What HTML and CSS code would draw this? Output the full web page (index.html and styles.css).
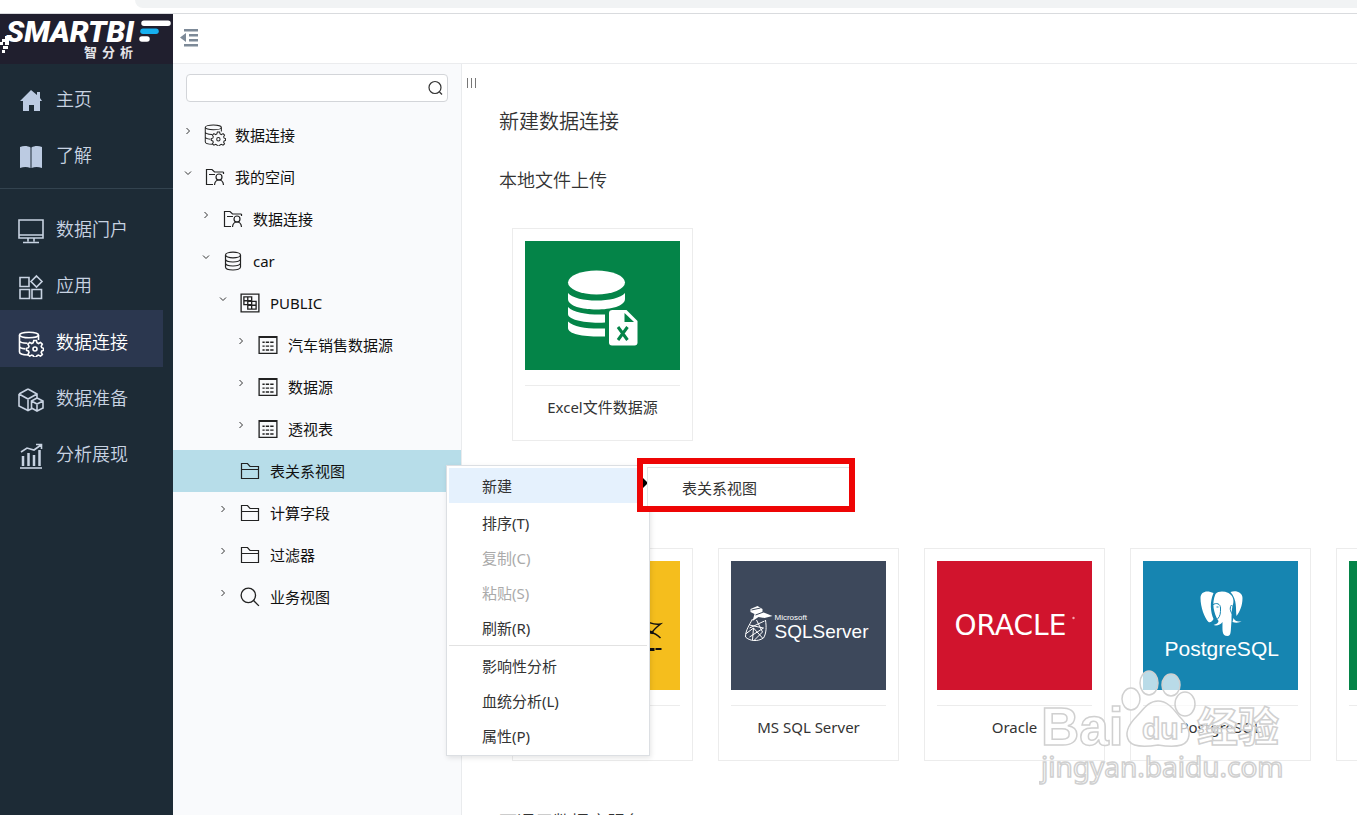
FILE: index.html
```html
<!DOCTYPE html>
<html lang="zh-CN">
<head>
<meta charset="utf-8">
<title>Smartbi 数据连接</title>
<link rel="stylesheet" href="styles.css">
</head>
<body>
<svg class="defs" aria-hidden="true">
  <symbol id="i-dbgear" viewBox="0 0 26 26">
    <ellipse cx="11" cy="4" rx="9.5" ry="2.8"/>
    <path d="M1.500 4v17c0 1.800 4 3 8.500 3M20.500 4v5M1.500 9.500c0 1.600 3.500 2.700 8 2.800M1.500 15.300c0 1.400 2.500 2.300 6 2.600"/>
    <path d="M15.800 10.500h2.600l.6 2.300 1.500.7 2-1.100 1.800 1.800-1.100 2 .6 1.500 1.700.6v2.100l-1.700.6-.6 1.500 1.100 2-1.800 1.600-2-1-1.500.6-.6 1.300h-2.600l-.6-1.300-1.500-.6-2 1-1.800-1.600 1.100-2-.6-1.500-1.800-.6v-2.100l1.800-.6.6-1.500-1.100-2 1.800-1.800 2 1.100 1.500-.7z" transform="translate(0 -1)"/>
    <circle cx="17" cy="18" r="2"/>
  </symbol>
  <symbol id="i-folder" viewBox="0 0 20 18"><path d="M1.500 16.500v-15h6l2.500 3h8.500v12zM1.500 7.500h17"/></symbol>
  <symbol id="i-userfolder" viewBox="0 0 20 18"><path d="M8 16.500H1.500v-15h5.500l2.500 2.500h9M4 6.500h6M18.500 4v2"/><circle cx="14" cy="9" r="3"/><path d="M9.500 17c.3-3.300 2-5 4.500-5s4.200 1.700 4.500 5"/></symbol>
  <symbol id="i-db" viewBox="0 0 18 20"><ellipse cx="9" cy="4" rx="7.500" ry="2.800"/><path d="M1.500 4v12c0 4 15 4 15 0V4M1.500 8c0 4 15 4 15 0M1.500 12c0 4 15 4 15 0"/></symbol>
  <symbol id="i-schema" viewBox="0 0 18 18"><path d="M1 1h16v16H1zM3.500 3.500h7v7h-7zM7 3.500v7M3.500 7h7M7 7.500h7.500v7H7zM10.500 7.500v7M7 11h7.500"/></symbol>
  <symbol id="i-table" viewBox="0 0 18 18"><path d="M1 1.500h16v15H1zM1 2h16"/><path d="M4 6.500h2M7 6.500h3M11 6.500h3M4 10h2M7 10h3M11 10h3M4 13.500h2M7 13.500h3M11 13.500h3"/></symbol>
  <symbol id="i-search" viewBox="0 0 18 18"><circle cx="7.500" cy="7.500" r="6.500"/><path d="m12 12 5 5"/></symbol>
  <symbol id="i-lens" viewBox="0 0 18 18"><circle cx="9" cy="8.500" r="6"/><path d="m13.500 13 2.500 2.500"/></symbol>
  <symbol id="i-right" viewBox="0 0 8 8"><path d="m2.500 1 3 3-3 3"/></symbol>
  <symbol id="i-down" viewBox="0 0 8 8"><path d="m1 2.500 3 3 3-3"/></symbol>
</svg>

<div class="strip"><div class="strip-bar"></div></div>
<div class="app">
  <aside class="side">
    <a class="logo" href="#" aria-label="Smartbi">
      <svg width="173" height="50" viewBox="0 0 173 50">
        <path fill="#fff" d="M5 22h6v3H5zM2 25h7v3H2zM0 28h3v3H0zM5 28h4v3H5zM3 32h5v3H3zM2 36h3v3H2z"/>
        <text x="6" y="28" class="logo-name">SMARTBI</text>
        <text y="43" class="logo-sub"><tspan x="84">智</tspan><tspan x="102">分</tspan><tspan x="120">析</tspan></text>
        <g stroke-width="5.500" stroke-linecap="round"><path stroke="#fff" d="M144 9.200h24M142 25h5"/><path stroke="#16b0ef" d="M143 17.200h13"/></g>
      </svg>
    </a>
    <nav class="nav">
      <div class="nav-group top">
        <a class="nav-item" href="#"><svg class="ni" viewBox="0 0 26 26"><path class="fill" d="M13 2 2 13h3v10h6v-6h5v6h6V13h2L22 10V4h-3v3z"/></svg>主页</a>
        <a class="nav-item" href="#"><svg class="ni" viewBox="0 0 26 26"><path class="fill" d="M2 3c4-1.500 8-1 10.500.5V24C9 22.500 6 22.500 2 24zM13.500 3.500C16 2 20 1.500 24 3v21c-4-1.500-7-1.500-10.500 0z"/></svg>了解</a>
      </div>
      <div class="nav-group">
        <a class="nav-item" href="#"><svg class="ni" viewBox="0 0 26 26"><path d="M1 2h24v18H1zM1 17h24M10 20v3.500M16 20v3.500M5 24.500h16"/></svg>数据门户</a>
        <a class="nav-item" href="#"><svg class="ni" viewBox="0 0 26 26"><path d="M2 3.500h9v9H2zM2 15.500h9.500v9H2zM14 15.500h9.500v9H14zM18.500 2l5.500 5.500-5.500 5.500L13 7.500z"/></svg>应用</a>
        <a class="nav-item on" href="#" aria-current="page"><svg class="ni"><use href="#i-dbgear"/></svg>数据连接</a>
        <a class="nav-item" href="#"><svg class="ni" viewBox="0 0 26 26"><path d="m10 2 9 5v4M1 7l9-5M1 7v12l9 4.500 4-2M1 7l9 5 9-5M10 12v11M19 11l-5.500 3v7l5.500 3 6-3v-7zM13.500 14l5.500 3 6-3M19 17v7"/></svg>数据准备</a>
        <a class="nav-item" href="#"><svg class="ni" viewBox="0 0 26 26"><path d="M2 25h22"/><path stroke-width="2.500" d="M5 13v10M10.500 10v13M16 12v11M21.500 7v16"/><path d="m3 9 6-4 7 2 7-5M18 1.500h5.500V6"/></svg>分析展现</a>
      </div>
    </nav>
  </aside>

  <div class="work">
    <header class="bar">
      <button class="collapse" type="button" aria-label="收起菜单"><svg width="20" height="18" viewBox="0 0 20 18"><path fill="#7d8a98" d="M4 0h14v2.500H4zM9 5h9v2.500H9zM9 10h9v2.500H9zM4 15h14v2.500H4zM0 8.500 6 4v9z"/></svg></button>
    </header>
    <div class="panes">
      <section class="tree" aria-label="资源树">
        <div class="search"><input type="search" aria-label="搜索"><svg width="18" height="18"><use href="#i-lens"/></svg></div>
        <ul class="rows">
          <li><button type="button" class="row l0"><svg class="ar"><use href="#i-right"/></svg><svg class="ic big"><use href="#i-dbgear"/></svg>数据连接</button></li>
          <li><button type="button" class="row l0"><svg class="ar"><use href="#i-down"/></svg><svg class="ic"><use href="#i-userfolder"/></svg>我的空间</button></li>
          <li><button type="button" class="row l1"><svg class="ar"><use href="#i-right"/></svg><svg class="ic"><use href="#i-userfolder"/></svg>数据连接</button></li>
          <li><button type="button" class="row l1"><svg class="ar"><use href="#i-down"/></svg><svg class="ic"><use href="#i-db"/></svg>car</button></li>
          <li><button type="button" class="row l2"><svg class="ar"><use href="#i-down"/></svg><svg class="ic"><use href="#i-schema"/></svg>PUBLIC</button></li>
          <li><button type="button" class="row l3"><svg class="ar"><use href="#i-right"/></svg><svg class="ic"><use href="#i-table"/></svg>汽车销售数据源</button></li>
          <li><button type="button" class="row l3"><svg class="ar"><use href="#i-right"/></svg><svg class="ic"><use href="#i-table"/></svg>数据源</button></li>
          <li><button type="button" class="row l3"><svg class="ar"><use href="#i-right"/></svg><svg class="ic"><use href="#i-table"/></svg>透视表</button></li>
          <li><button type="button" class="row l2 on"><svg class="ar"></svg><svg class="ic"><use href="#i-folder"/></svg>表关系视图</button></li>
          <li><button type="button" class="row l2"><svg class="ar"><use href="#i-right"/></svg><svg class="ic"><use href="#i-folder"/></svg>计算字段</button></li>
          <li><button type="button" class="row l2"><svg class="ar"><use href="#i-right"/></svg><svg class="ic"><use href="#i-folder"/></svg>过滤器</button></li>
          <li><button type="button" class="row l2"><svg class="ar"><use href="#i-right"/></svg><svg class="ic"><use href="#i-search"/></svg>业务视图</button></li>
        </ul>
      </section>

      <main class="main">
        <svg class="grip" width="12" height="12" viewBox="0 0 12 12"><path d="M1.500 1v10M5.500 1v10M9.500 1v10"/></svg>
        <h1>新建数据连接</h1>
        <h2>本地文件上传</h2>
        <div class="cards">
          <a class="card" href="#">
            <svg class="pic green" viewBox="0 0 154 129">
              <g fill="#fff"><ellipse cx="71" cy="41.500" rx="28.500" ry="12"/>
              <path d="M42.500 52c8 10 49 10 57 0v6c0 14-57 14-57 0zM42.500 66c6 6 20 8 37 7.500v8C60 82.500 42.500 79 42.500 73zM42.500 80.500c6 6 20 7.500 37 7v8c-20 .5-37-2-37-8.500z"/>
              <path d="M87 69h14l11 11v21.500q0 3-3 3H86.500q-3 0-3-3V72q0-3 3.500-3z"/></g>
              <path fill="#048448" d="M99 72v9h9.500z"/><path stroke="#048448" stroke-width="3" d="m92.500 86 9.500 13M102 86l-9.500 13"/>
            </svg>
            <span class="cap">Excel文件数据源</span>
          </a>
        </div>
        <h2>关系数据库</h2>
        <div class="cards">
          <a class="card" href="#">
            <svg class="pic yellow" viewBox="0 0 154 129"><path fill="none" stroke="#111" stroke-width="1.500" d="M118 58c5 4 10 6 17 5-5 4-7 6-9 9 4 0 6 2 9 5"/><path fill="none" stroke="#111" stroke-width="2.500" d="m128 72-9-3"/><path fill="#111" d="M100 87h29v3h-29zM130 87h6v2h-6z"/></svg>
            <span class="cap">MySQL</span>
          </a>
          <a class="card" href="#">
            <svg class="pic slate" viewBox="0 0 154 129">
              <path fill="#fff" d="m19 48 7-3 5 3v3l10 4-8 2-6-1-6 4 2-7-4-2z"/>
              <g fill="none" stroke="#fff"><path d="M21 58c-3 6-7 11-7 18 4 4 12 5 18 1 3-5 3-11 2-18M14 73l8-6 9 10M18 64l14 3-14 9M22 67l-1 12M25 59l6 12-9 9M33 60l-15 7"/></g>
              <path stroke="#3d485b" d="m20 49 9-2M24 54l8-3"/>
              <text x="43" y="59" class="arial s8">Microsoft</text><text x="43" y="77" class="arial s19">SQLServer</text>
            </svg>
            <span class="cap">MS SQL Server</span>
          </a>
          <a class="card" href="#">
            <svg class="pic red" viewBox="0 0 154 129"><text x="17" y="74" class="oracle">ORACLE</text><circle cx="136" cy="57" r="1.200" fill="#f6a5ae"/></svg>
            <span class="cap">Oracle</span>
          </a>
          <a class="card" href="#">
            <svg class="pic blue" viewBox="0 0 154 129">
              <path fill="#fff" d="M70 32c-6-3-13-2-13 5 0 9 4 20 8 24 2 1 4-1 5-3-3-7-4-17 0-26zM87 31c5-2 12 0 12 6 0 8-3 14-6 18-1-7 1-16-6-24zM72 33c3-3 8-3 13-1 5 3 6 8 4 13-1 5-1 9-1 15-1 10 0 15-4 15-6 0-5-6-5-14-2 3-6 4-9 3 3-1 5-2 5-4-5-8-7-18-3-27zM90 57c2 4 5 4 8 3-2 2-6 2-9 1z"/>
              <path fill="none" stroke="#1685b1" d="M69 44c4-3 8-1 8 3 0 5 0 8-3 11M88 44c-3 4 0 8 2 11"/><path stroke="#1685b1" d="M73 46h2M89 45h2"/>
              <text x="21" y="95" class="arial s21">PostgreSQL</text>
            </svg>
            <span class="cap">PostgreSQL</span>
          </a>
          <a class="card" href="#" aria-label="Hive"><svg class="pic green" viewBox="0 0 154 129"></svg><span class="cap"></span></a>
        </div>
        <h2 class="next">可通用数据库服务</h2>
      </main>
    </div>
  </div>
</div>

<div class="menu" role="menu">
  <button type="button" class="on">新建</button>
  <button type="button">排序(T)</button>
  <button type="button" disabled>复制(C)</button>
  <button type="button" disabled>粘贴(S)</button>
  <button type="button">刷新(R)</button>
  <hr>
  <button type="button">影响性分析</button>
  <button type="button">血统分析(L)</button>
  <button type="button">属性(P)</button>
</div>
<div class="submenu" role="menu"><svg class="point" width="4" height="12" viewBox="0 0 4 12"><path d="M0 1v10l4-4V5z"/></svg><button type="button">表关系视图</button></div>

<svg class="mark" width="250" height="120" viewBox="0 0 250 120" aria-hidden="true">
  <g class="ghost">
    <text x="2" y="79" class="wm-bai">Bai</text>
    <ellipse cx="92" cy="33" rx="9" ry="11"/><ellipse cx="110" cy="17" rx="9" ry="12"/><ellipse cx="132" cy="19" rx="9" ry="11"/><ellipse cx="146" cy="38" rx="10" ry="12"/>
    <path d="M119 35c10 0 16 9 21 15 8 8 13 17 8 25-4 6-16 6-29 4-13 2-25 2-29-4-5-8 0-17 8-25 6-6 11-15 21-15z"/>
    <text x="103" y="73" class="wm-du">du</text>
    <text x="158" y="76" class="wm-cn">经验</text>
    <text x="2" y="111" class="wm-url">jingyan.baidu.com</text>
  </g>
</svg>
</body>
</html>
```
FILE: styles.css
```css
* { box-sizing: border-box; }
body {
  margin: 0;
  height: 100vh;
  overflow: hidden;
  position: relative;
  display: flex;
  flex-direction: column;
  background: #fff;
  color: #333;
  font: 15px/20px "Noto Sans", "Noto Sans CJK SC", sans-serif;
}
a { color: inherit; text-decoration: none; }
button { font: inherit; color: inherit; border: 0; background: none; padding: 0; text-align: left; cursor: pointer; }
.defs { position: absolute; width: 0; height: 0; }

.strip { flex: none; height: 14px; padding-left: 135px; border-bottom: 1px solid #d9dbde; overflow: hidden; }
.strip-bar { height: 8px; background: #f1f3f4; border-bottom-left-radius: 8px; }

.app { flex: 1; min-height: 0; display: flex; }
.side { flex: none; width: 173px; background: #1d2b36; }
.logo { display: block; height: 50px; background: #201f2e; }
.logo svg { display: block; }
.logo-name { font: italic 900 30px Roboto, sans-serif; fill: #fff; }
.logo-sub { font: bold 13px "Noto Sans CJK SC", sans-serif; fill: #e4e4e8; }
.nav-group { padding-top: 9px; }
.nav-group.top { padding: 4px 0 8px; border-bottom: 1px solid #33434f; }
.nav-item {
  display: flex;
  align-items: center;
  gap: 12px;
  width: 163px;
  height: 56px;
  padding: 6px 0 0 18px;
  font-size: 18px;
  font-weight: 350;
  color: #c8d3e2;
}
.nav-item.on { height: 57px; background: #2b374f; color: #fff; }
.ni { width: 26px; height: 26px; margin-top: 4px; fill: none; stroke: currentColor; stroke-width: 1.6; }
.ni .fill { fill: #bccbe2; stroke: none; }

.work { flex: 1; min-width: 0; display: flex; flex-direction: column; }
.bar { flex: none; height: 50px; padding: 15px 7px; border-bottom: 1px solid #ebecee; }
.collapse { display: block; }
.collapse svg { display: block; }
.panes { flex: 1; min-height: 0; display: flex; }

.tree { flex: none; width: 289px; background: #f9fafc; border-right: 1px solid #e9ebed; overflow: hidden; }
.search { display: flex; align-items: center; margin: 10px 13px 12px; height: 28px; padding: 0 3px; background: #fff; border: 1px solid #d3d5d9; border-radius: 4px; }
.search input { flex: 1; min-width: 0; border: 0; outline: 0; background: none; font: inherit; }
.search svg { fill: none; stroke: #333; stroke-width: 1.2; }
.rows { list-style: none; margin: 0; padding: 0; color: #111; }
.row { display: flex; align-items: center; width: 100%; height: 42px; }
.row.on { background: #b7dde9; }
.l0 { padding-left: 11px; }
.l1 { padding-left: 29px; }
.l2 { padding-left: 46px; }
.l3 { padding-left: 64px; }
.ar { width: 8px; height: 8px; margin: 0 13px 8px 0; fill: none; stroke: #333; }
.ic { width: 20px; height: 20px; margin-right: 10px; fill: none; stroke: #222; stroke-width: 1.2; }
.ic.big { width: 22px; height: 22px; margin: 0 9px 0 -1px; }

.main { flex: 1; min-width: 0; position: relative; padding: 43px 0 0 37px; overflow: hidden; }
.grip { position: absolute; left: 4px; top: 13px; stroke: #777; }
h1, h2 { margin: 0; font-weight: 350; color: #333; }
h1 { font-size: 20px; line-height: 30px; }
h2 { font-size: 18px; line-height: 28px; margin-top: 45px; }
h1 + h2 { margin-top: 29px; }
h2.next { margin-top: 47px; }
.cards { display: flex; gap: 25px; margin: 34px 0 0 13px; }
.card { flex: none; width: 181px; height: 213px; padding: 12px; border: 1px solid #ececec; text-align: center; background: #fff; }
.pic { display: block; width: 100%; height: 129px; margin-bottom: 15px; }
.cap { display: block; padding-top: 11px; border-top: 1px solid #ececec; }
.green { background: #048448; }
.yellow { background: #f5be1d; }
.slate { background: #3d485b; }
.red { background: #d1142d; }
.blue { background: #1685b1; }
.arial { font-family: "Liberation Sans", sans-serif; fill: #fff; }
.s8 { font-size: 8px; }
.s19 { font-size: 19px; }
.s21 { font-size: 21px; }
.oracle { font: 28px "DejaVu Sans", sans-serif; fill: #fff; }

.menu {
  position: absolute;
  left: 446px;
  top: 465px;
  width: 204px;
  padding: 2px;
  background: #fff;
  border: 1px solid #dcdfe3;
  box-shadow: 1px 2px 5px rgba(0, 0, 0, .1);
}
.menu button { display: block; width: 100%; height: 35px; padding-left: 33px; }
.menu .on { background: #e5f1fd; margin-bottom: 2px; }
.menu button:disabled { color: #aaa; }
.menu hr { margin: 0 0 2px; border: 0; border-top: 1px solid #e2e2e2; }
.submenu {
  position: absolute;
  left: 637px;
  top: 458px;
  width: 218px;
  height: 54px;
  border: 6px solid #ee0505;
  background: #fff;
  display: flex;
}
.submenu button { flex: 1; margin: 3px 0 0; padding: 2px 0 0 34px; border: 1px solid #e2e4e6; border-width: 1px 0 0 1px; }
.point { margin-top: 13px; width: 4px; }

.mark { position: absolute; left: 1039px; top: 666px; pointer-events: none; }
.ghost { fill: rgba(255, 255, 255, .7); stroke: #d0d0d0; stroke-width: 1.5; }
.wm-bai { font: bold 53px "Liberation Sans", sans-serif; }
.wm-du { font: bold 30px "Liberation Sans", sans-serif; }
.wm-cn { font: bold 41px "Noto Sans CJK SC", sans-serif; }
.wm-url { font: 28px "Noto Sans", sans-serif; }
```
